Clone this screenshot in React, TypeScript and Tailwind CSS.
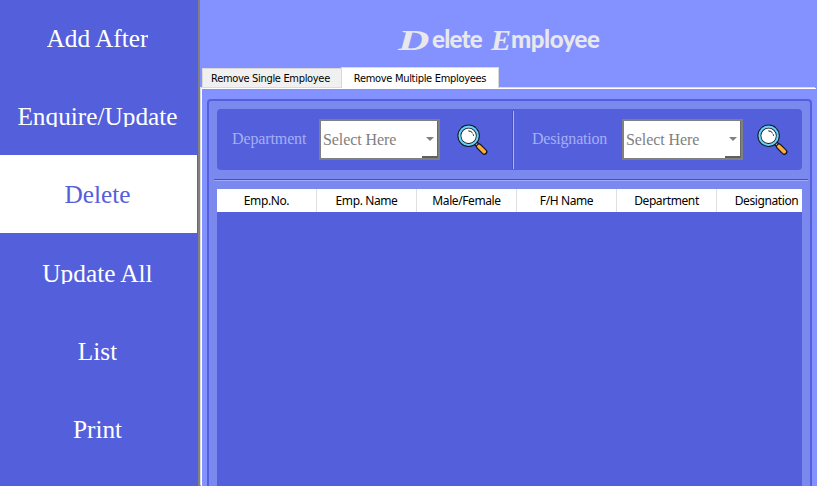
import React from "react";

const navItems = ["Add After", "Enquire/Update", "Delete", "Update All", "List", "Print"];
const columns = ["Emp.No.", "Emp. Name", "Male/Female", "F/H Name", "Department", "Designation"];

function Magnifier() {
  return (
    <svg width="31" height="32" viewBox="0 0 31 32" className="block shrink-0">
      <path d="M18 18.5 L21 21.5" stroke="#111820" strokeWidth="4.6" />
      <path d="M17.5 18 L21 21.5" stroke="#c9d3dc" strokeWidth="2" />
      <path d="M22 22.5 L27.4 27.8" stroke="#111820" strokeWidth="6" strokeLinecap="round" />
      <path d="M22 22.5 L27.2 27.6" stroke="#ffad3d" strokeWidth="3.8" strokeLinecap="round" />
      <circle cx="11.6" cy="11.8" r="11.2" fill="#111820" />
      <circle cx="11.6" cy="11.8" r="10.2" fill="#6bd0f5" />
      <circle cx="11.6" cy="11.8" r="8.1" fill="#111820" />
      <circle cx="11.6" cy="11.8" r="7.3" fill="#fff" />
      <path d="M11.3 6.9 A5 5 0 0 1 16.5 11.8" fill="none" stroke="#111820" strokeWidth="1" strokeDasharray="5 1.2 2" />
    </svg>
  );
}

function SelectBox() {
  return (
    <div className="flex h-[41px] w-[121px] shrink-0 items-center border-2 border-[#808080] bg-white pl-[2px] text-[#808080]">
      <span className="w-[99px] whitespace-nowrap text-[16px] leading-5 tracking-[-0.08px]">Select Here</span>
      <div className="flex h-[37px] w-[16px] flex-col items-center border-r border-b-2 border-r-[#696969] border-b-[#606060] pt-[16px]">
        <svg width="8" height="4" viewBox="0 0 8 4"><path d="M0 0H8L4 4Z" fill="#808080" /></svg>
      </div>
    </div>
  );
}

export default function App() {
  return (
    <div className="flex h-[486px] w-[817px] overflow-hidden bg-[#8492ff] font-['Liberation_Serif','Times_New_Roman',serif]">
      <nav className="h-full w-[200px] shrink-0 border-r-2 border-[#808080] bg-[#5460db] text-white">
        <div className="-mt-px w-[197px]">
          {navItems.map((item, i) => (
            <div
              key={item}
              className={"flex items-center justify-center pr-[2px] pb-[3px] " + (item === "Delete" ? "h-[78px] bg-white text-[#5460db]" : i === 3 ? "h-[79px]" : "h-[78px]")}
            >
              <span className="h-[25px] overflow-hidden whitespace-nowrap text-[25.3px] leading-[28px]">{item}</span>
            </div>
          ))}
        </div>
      </nav>
      <main className="flex min-w-0 grow flex-col">
        <h1 className="flex h-[67px] shrink-0 items-baseline pt-[21px] pl-[198px] font-['Lato'] text-[24px] leading-[34px] font-black text-[#e8e8ea]">
          <span className="w-[34px] font-['Liberation_Serif'] text-[30px] italic"><span className="inline-block origin-left translate-y-[2px] scale-x-[1.45]">D</span></span>
          <span className="w-[59px] tracking-[-0.7px]">elete</span>
          <span className="w-[20px] font-['Liberation_Serif'] text-[30px] italic"><span className="inline-block translate-y-[2px]">E</span></span>
          <span className="tracking-[-0.45px]">mployee</span>
        </h1>
        <div className="z-10 flex h-[21px] shrink-0 items-end pl-[2px] font-['DejaVu_Sans_Condensed','DejaVu_Sans',sans-serif] text-[11px] text-black">
          <div className="mb-px flex h-[19px] w-[139px] items-center justify-center border-t border-l border-[#d9d9d9] bg-[#f0f0f0] pt-[3px] pr-[3px]">
            <span className="whitespace-nowrap tracking-[-0.32px]">Remove Single Employee</span>
          </div>
          <div className="flex h-[21px] w-[158px] items-center justify-center border-x border-t border-[#d9d9d9] bg-white pt-[2px]">
            <span className="whitespace-nowrap tracking-[-0.3px]">Remove Multiple Employees</span>
          </div>
        </div>
        <div className="mr-px ml-px flex min-h-0 grow flex-col border-t border-l border-white pt-[10px] pr-[4px] pl-[5px] shadow-[-1px_-1px_0_#dcdcdc]">
          <section className="flex min-h-0 grow flex-col rounded-t-[4px] border-2 border-b-0 border-[#5460db] bg-[#7b88ed] pt-[8px]">
            <div className="mx-2 flex h-[61px] shrink-0 items-center rounded-[4px] bg-[#5460db] text-[16px] text-[#a5aef5]">
              <span className="w-[102px] shrink-0 pb-px pl-[15px] tracking-[-0.12px] whitespace-nowrap">Department</span>
              <SelectBox />
              <div className="w-[72px] shrink-0 pl-[17px]"><Magnifier /></div>
              <div className="h-[58px] w-[2px] shrink-0 border-l border-[#4650b8] bg-[#aeb6fa]" />
              <span className="w-[108px] shrink-0 pb-px pl-[18px] tracking-[-0.2px] whitespace-nowrap">Designation</span>
              <SelectBox />
              <div className="pl-[14px]"><Magnifier /></div>
            </div>
            <div className="mt-[9px] mr-[2px] ml-[5px] h-[2px] shrink-0 border-t border-[#4650b8] bg-[#9ca8ff]" />
            <div className="mx-2 mt-[8px] flex min-h-0 grow flex-col overflow-hidden bg-[#5460db]">
              <div className="flex h-[23px] shrink-0 bg-white font-['Noto_Sans','Open_Sans',sans-serif] text-[12px] text-black">
                {columns.map((c) => (
                  <div key={c} className="flex w-[100px] shrink-0 items-center justify-center border-r border-[#e0e0e0] pt-px tracking-[-0.4px] whitespace-nowrap">{c}</div>
                ))}
              </div>
            </div>
          </section>
        </div>
      </main>
    </div>
  );
}
